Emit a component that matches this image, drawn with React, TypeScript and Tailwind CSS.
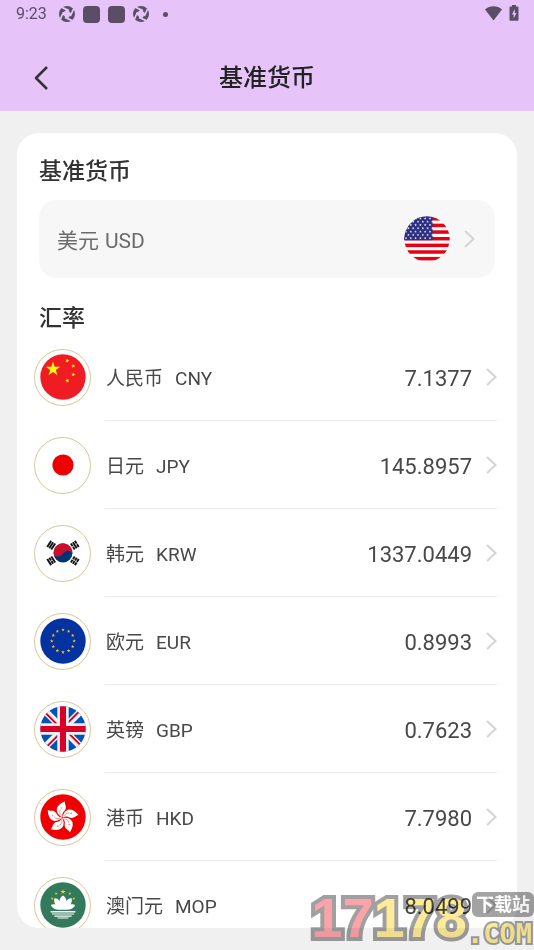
import type { ReactNode } from "react";

const STAR =
  "M0-1 .225-.309 .951-.309 .363.118 .588.809 0 .382-.588.809-.363.118-.951-.309-.225-.309Z";

function Star({ x, y, r, rotate = 0, fill }: { x: number; y: number; r: number; rotate?: number; fill: string }) {
  return <path d={STAR} fill={fill} transform={`translate(${x} ${y}) rotate(${rotate}) scale(${r})`} />;
}

function Flag({ id, children }: { id: string; children: ReactNode }) {
  return (
    <svg viewBox="-23 -23 46 46" className="size-[46px] shrink-0" aria-hidden="true">
      <clipPath id={`flag-${id}`}>
        <circle r="22.7" />
      </clipPath>
      <g clipPath={`url(#flag-${id})`}>{children}</g>
    </svg>
  );
}

function FlagUSD() {
  const stars: ReactNode[] = [];
  for (let row = 0; row < 7; row++) {
    for (let col = 0; col < 6; col++) {
      stars.push(
        <Star
          key={`${row}-${col}`}
          x={-21 + col * 4.8 + (row % 2) * 2.4}
          y={-20.6 + row * 3.3}
          r={1.4}
          fill="#fff"
        />
      );
    }
  }
  return (
    <Flag id="usd">
      <rect x="-23" y="-23" width="46" height="46" fill="#fff" />
      {[0, 1, 2, 3, 4, 5, 6].map((i) => (
        <rect key={i} x="-23" y={-22 + i * 6.65} width="46" height="3.5" fill="#e60012" />
      ))}
      <rect x="-23" y="-23" width="28.6" height="24.2" fill="#2b2f86" />
      {stars}
    </Flag>
  );
}

function FlagCNY() {
  return (
    <Flag id="cny">
      <rect x="-23" y="-23" width="46" height="46" fill="#f01c24" />
      <Star x={-10} y={-7.8} r={7.6} fill="#ff0" />
      <Star x={4.3} y={-16.3} r={2.2} rotate={20} fill="#ff0" />
      <Star x={10.3} y={-11} r={2.2} rotate={-10} fill="#ff0" />
      <Star x={10.3} y={-2.5} r={2.2} rotate={10} fill="#ff0" />
      <Star x={4.3} y={3.6} r={2.2} rotate={-15} fill="#ff0" />
    </Flag>
  );
}

function FlagJPY() {
  return (
    <Flag id="jpy">
      <circle r="10.6" fill="#ee0000" />
    </Flag>
  );
}

function Trigram({ x, y, rotate, gaps }: { x: number; y: number; rotate: number; gaps: number[] }) {
  return (
    <g transform={`translate(${x} ${y}) rotate(${rotate})`}>
      {[-2.4, 0, 2.4].map((offset, i) => (
        <g key={offset}>
          <rect x={offset - 0.95} y="-3.6" width="1.9" height="7.2" fill="#111" />
          {gaps.includes(i) && <rect x={offset - 1} y="-0.4" width="2" height="0.8" fill="#fff" />}
        </g>
      ))}
    </g>
  );
}

function FlagKRW() {
  return (
    <Flag id="krw">
      <circle r="9.4" fill="#003478" />
      <path
        d="M-9 2.4A9.4 9.4 0 1 1 9.3 1.2C8.6-2.2 4.6-3.4 1.6-1C-.2.6-1.2 2.6-3.6 3.2C-5.8 3.8-8 3.6-9 2.4Z"
        fill="#c8102e"
      />
      <Trigram x={-11.8} y={-7.8} rotate={33} gaps={[]} />
      <Trigram x={11.8} y={-7.8} rotate={-33} gaps={[0, 2]} />
      <Trigram x={-11.8} y={7.8} rotate={-33} gaps={[1]} />
      <Trigram x={11.8} y={7.8} rotate={33} gaps={[0, 1, 2]} />
    </Flag>
  );
}

function FlagEUR() {
  return (
    <Flag id="eur">
      <rect x="-23" y="-23" width="46" height="46" fill="#0432a0" />
      {Array.from({ length: 12 }, (_, i) => {
        const a = (i * Math.PI) / 6;
        return <Star key={i} x={11.2 * Math.sin(a)} y={-11.2 * Math.cos(a)} r={1.9} fill="#f5cf16" />;
      })}
    </Flag>
  );
}

function FlagGBP() {
  return (
    <Flag id="gbp">
      <rect x="-23" y="-23" width="46" height="46" fill="#0052b4" />
      <path d="M-23-23 23 23M23-23-23 23" stroke="#f0f0f0" strokeWidth="6.8" />
      <path d="M-23-21.6 0 1.4M23 21.6 0-1.4M23-24.4 0-1.4M-23 24.4 0 1.4" stroke="#d80027" strokeWidth="2" />
      <path d="M0-23V23M-23 0H23" stroke="#f0f0f0" strokeWidth="11.4" />
      <path d="M0-23V23M-23 0H23" stroke="#d80027" strokeWidth="6" />
    </Flag>
  );
}

function FlagHKD() {
  return (
    <Flag id="hkd">
      <rect x="-23" y="-23" width="46" height="46" fill="#f00000" />
      {[0, 72, 144, 216, 288].map((angle) => (
        <g key={angle} transform={`translate(-.6 .6) rotate(${angle})`}>
          <path
            d="M.4-.4C-2.6-1.2-6.2-4.6-5.6-8.6C-5-12.4-1.4-14.8 2.6-16.2C2-13.8 4.2-11.8 3.2-8.6C2.2-6-1.2-5 .4-.4Z"
            fill="#fff"
          />
          <path d="M-.8-2.2C-2.8-3.8-3.2-6-2-8" fill="none" stroke="#f00000" strokeWidth=".4" />
          <Star x={-1.3} y={-9.6} r={0.9} fill="#f00000" />
        </g>
      ))}
    </Flag>
  );
}

function FlagMOP() {
  return (
    <Flag id="mop">
      <rect x="-23" y="-23" width="46" height="46" fill="#337a5c" />
      <Star x={0} y={-13.2} r={2.8} fill="#f5cf16" />
      <Star x={-6.8} y={-11.4} r={1.6} rotate={-20} fill="#f5cf16" />
      <Star x={6.8} y={-11.4} r={1.6} rotate={20} fill="#f5cf16" />
      <Star x={-10.8} y={-6.4} r={1.6} rotate={-30} fill="#f5cf16" />
      <Star x={10.8} y={-6.4} r={1.6} rotate={30} fill="#f5cf16" />
      <path
        d="M0-9.4C2.2-8.2 3.4-6 3.4-4C4.6-6 6.6-7 8.6-6.8C9.2-4.4 8.6-2 7.6-.6C9-1 11-.8 12.2 0C11.2 2.6 8.6 4.4 5 4.8H-5C-8.6 4.4-11.2 2.6-12.2 0C-11-.8-9-1-7.6-.6C-8.6-2-9.2-4.4-8.6-6.8C-6.6-7-4.6-6-3.4-4C-3.4-6-2.2-8.2 0-9.4Z"
        fill="#fff"
      />
      <path d="M-12.4 6.7H12.4" stroke="#fff" strokeWidth="1.4" />
      <path d="M-11 9H11M-8.6 11.2H8.6M-5.4 13H5.4" stroke="#fff" strokeWidth="1.2" />
    </Flag>
  );
}

function Chevron({ className }: { className?: string }) {
  return (
    <svg viewBox="0 0 11 18" className={`h-[18px] w-[11px] shrink-0 ${className ?? ""}`} fill="none" aria-hidden="true">
      <path d="M1 1 9.6 9 1 17" stroke="#d4d4d4" strokeWidth="2" />
    </svg>
  );
}

function ShutterIcon() {
  return (
    <svg viewBox="-8 -8 16 16" className="size-4" aria-hidden="true">
      <circle r="8" fill="#5c4d66" />
      <path d="M-2.6-3.4H2.6L3.6-2.4V2.4L2.6 3.4H-2.6L-3.6 2.4V-2.4Z" fill="#e6c4f9" transform="rotate(45)" />
      {[0, 90, 180, 270].map((angle) => (
        <path key={angle} transform={`rotate(${angle})`} d="M2-3.4-5.2-6.6" stroke="#e6c4f9" strokeWidth="1.7" />
      ))}
    </svg>
  );
}

const rates = [
  { name: "人民币", code: "CNY", rate: "7.1377", flag: <FlagCNY /> },
  { name: "日元", code: "JPY", rate: "145.8957", flag: <FlagJPY /> },
  { name: "韩元", code: "KRW", rate: "1337.0449", flag: <FlagKRW /> },
  { name: "欧元", code: "EUR", rate: "0.8993", flag: <FlagEUR /> },
  { name: "英镑", code: "GBP", rate: "0.7623", flag: <FlagGBP /> },
  { name: "港币", code: "HKD", rate: "7.7980", flag: <FlagHKD /> },
  { name: "澳门元", code: "MOP", rate: "8.0499", flag: <FlagMOP /> },
];

function StatusBar() {
  return (
    <div className="flex h-7 items-center justify-between pl-4 pr-[15px] text-[#5c4d66]">
      <div className="flex items-center gap-2">
        <span className="mr-1 text-[16px] leading-5">9:23</span>
        <ShutterIcon />
        <span className="size-[17px] rounded bg-[#5c4d66]" />
        <span className="size-[17px] rounded bg-[#5c4d66]" />
        <ShutterIcon />
        <span className="ml-1.5 size-[5px] rounded-full bg-[#5c4d66]" />
      </div>
      <div className="flex items-center gap-[7px] pb-0.5">
        <svg viewBox="0 0 17 15" className="h-[15px] w-[17px]" aria-hidden="true">
          <path d="M0 3.4C5-.9 12-.9 17 3.4L8.5 14.6Z" fill="#5c4d66" />
        </svg>
        <svg viewBox="0 0 10 16" className="h-4 w-[10px]" aria-hidden="true">
          <path d="M3 0H7V1.6H8.6Q9.5 1.6 9.5 2.6V15Q9.5 15.8 8.6 15.8H1.4Q.5 15.8 .5 15V2.6Q.5 1.6 1.4 1.6H3Z" fill="#5c4d66" />
          <path d="M5.8 4 3 9.4H4.7V13.4L7.4 8H5.8Z" fill="#e6c4f9" />
        </svg>
      </div>
    </div>
  );
}

function Watermark() {
  return (
    <div
      className="pointer-events-none absolute bottom-0 right-0 flex items-end font-bold mix-blend-multiply"
      aria-hidden="true"
    >
      <span className="font-['Liberation_Sans',sans-serif] text-[56px] leading-[64px] [-webkit-text-stroke:8px_#a0a0a0] [paint-order:stroke_fill]">
        <span className="text-[#fca3a9]">17</span>
        <span className="text-[#fdeb98]">178</span>
      </span>
      <span className="flex flex-col items-end">
        <span className="rounded-md bg-[#a3a3a3] px-1 text-[18px] leading-[25px] text-white">下载站</span>
        <span className="pr-[2px] font-['DejaVu_Sans_Mono',monospace] text-[27px] leading-[33px] text-[#fdeb98] [-webkit-text-stroke:4px_#a0a0a0] [paint-order:stroke_fill]">
          .COM
        </span>
      </span>
    </div>
  );
}

export default function App() {
  return (
    <div className="relative flex h-screen flex-col overflow-hidden bg-[#f0f0f0] font-[Roboto,'Noto_Sans_CJK_SC',sans-serif]">
      <header className="bg-[#e6c4f9]">
        <StatusBar />
        <div className="mt-4 grid h-[67px] grid-cols-[1fr_auto_1fr] items-center">
          <button type="button" aria-label="返回" className="ml-[33px] flex size-8 items-center">
            <svg viewBox="0 0 16 26" className="h-[26px] w-4" fill="none" aria-hidden="true">
              <path d="M14 2 3 13 14 24" stroke="#333" strokeWidth="2.6" strokeLinejoin="round" />
            </svg>
          </button>
          <h1 className="text-[24px] leading-8 font-medium text-[#222]">基准货币</h1>
        </div>
      </header>

      <main className="min-h-0 flex-1 px-[17px] py-[22px]">
        <div className="h-full overflow-hidden rounded-[22px] bg-white">
          <section className="px-[22px] pt-[23px]">
            <h2 className="text-[23px] leading-8 font-medium text-[#333]">基准货币</h2>
            <button
              type="button"
              className="mt-3 flex h-[78px] w-full items-center rounded-[18px] bg-[#f7f7f7] pl-[18px] pr-5"
            >
              <span className="flex flex-1 gap-1.5 pt-[3px] text-[21px] leading-8 text-[#6b6b6b]">
                <span>美元</span>
                <span>USD</span>
              </span>
              <FlagUSD />
              <Chevron className="ml-[14px]" />
            </button>
          </section>

          <section className="pt-[25px]">
            <h2 className="pl-[22px] text-[23px] leading-8 font-medium text-[#333]">汇率</h2>
            <ul className="-mt-0.5">
              {rates.map((item) => (
                <li key={item.code}>
                  <button type="button" className="flex h-[88px] w-full items-center gap-[14px] pl-[17px] pr-5">
                    <span className="flex size-[57px] shrink-0 items-center justify-center rounded-full border border-[#d8c69c]">
                      {item.flag}
                    </span>
                    <span className="flex h-full flex-1 items-center border-b border-[#ececec] text-[#484848]">
                      <span className="flex flex-1 gap-3 pt-[5px] pl-px text-[19px] leading-7">
                        <span>{item.name}</span>
                        <span>{item.code}</span>
                      </span>
                      <span className="pt-[5px] text-[22px] leading-8">{item.rate}</span>
                      <Chevron className="ml-[14px]" />
                    </span>
                  </button>
                </li>
              ))}
            </ul>
          </section>
        </div>
      </main>

      <Watermark />
    </div>
  );
}
